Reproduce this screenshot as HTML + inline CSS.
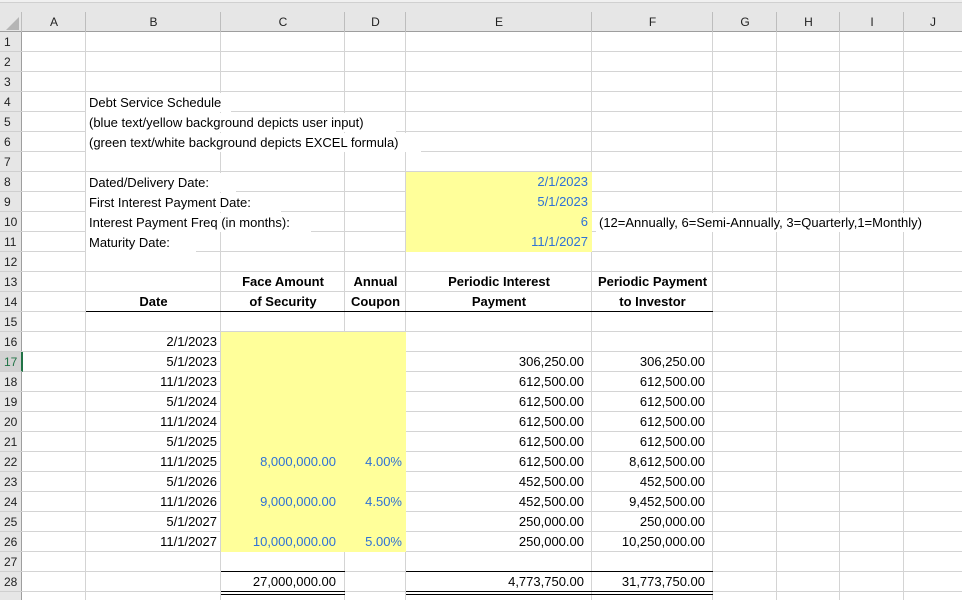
<!DOCTYPE html>
<html><head><meta charset="utf-8"><style>
*{margin:0;padding:0;box-sizing:border-box}
body{width:962px;height:600px;overflow:hidden;background:#fff;position:relative;font-family:"Liberation Sans",Arial,sans-serif;font-size:13px;color:#000}
#grid{position:absolute;left:0;top:32px;width:962px;height:568px;
background-image:
linear-gradient(to bottom,#d4d4d4 1px,transparent 1px);
background-size:962px 20px;background-position:0 19px}
.v{position:absolute;top:12px;bottom:0;width:1px;background:#d4d4d4}
.hd{position:absolute;left:0;top:0;width:962px;height:32px;background:#e6e6e6;border-bottom:1px solid #9e9e9e}
.hd .top{position:absolute;left:0;top:0;width:962px;height:3px;background:#f0f0f0;border-bottom:1px solid #d0d0d0}
.cl{position:absolute;top:12px;height:20px;line-height:20px;text-align:center;font-size:12px;color:#222}
.hs{position:absolute;top:12px;height:20px;width:1px;background:#bdbdbd}
.rh{position:absolute;left:0;top:32px;width:22px;height:568px;background:#e6e6e6;border-right:1px solid #9e9e9e}
.rn{position:absolute;left:0;width:22px;height:20px;line-height:20px;padding-left:4px;font-size:12px;color:#222;border-bottom:1px solid #cfcfcf}
.c{position:absolute;height:20px;line-height:20px;white-space:nowrap}
.r{text-align:right;padding-right:4px}
.l{padding-left:3px}
.ctr{text-align:center;font-weight:bold}
.y{position:absolute;background:#ffff9a}
.b{color:#2f72d6}
.hl{position:absolute;height:1px;background:#000}
.wb{background:#fff}
</style></head><body>
<div id="grid"></div>
<div class="v" style="left:85px"></div>
<div class="v" style="left:220px"></div>
<div class="v" style="left:344px"></div>
<div class="v" style="left:405px"></div>
<div class="v" style="left:591px"></div>
<div class="v" style="left:712px"></div>
<div class="v" style="left:776px"></div>
<div class="v" style="left:839px"></div>
<div class="v" style="left:903px"></div>

<div class="hd"><div class="top"></div>
<svg style="position:absolute;left:4px;top:15px" width="16" height="16"><polygon points="15,2 15,15 2,15" fill="#b5b5b5"/></svg>
<div class="hs" style="left:21px"></div>
<div class="cl" style="left:22px;width:64px">A</div><div class="hs" style="left:85px"></div>
<div class="cl" style="left:86px;width:135px">B</div><div class="hs" style="left:220px"></div>
<div class="cl" style="left:221px;width:124px">C</div><div class="hs" style="left:344px"></div>
<div class="cl" style="left:345px;width:61px">D</div><div class="hs" style="left:405px"></div>
<div class="cl" style="left:406px;width:186px">E</div><div class="hs" style="left:591px"></div>
<div class="cl" style="left:592px;width:121px">F</div><div class="hs" style="left:712px"></div>
<div class="cl" style="left:713px;width:64px">G</div><div class="hs" style="left:776px"></div>
<div class="cl" style="left:777px;width:63px">H</div><div class="hs" style="left:839px"></div>
<div class="cl" style="left:840px;width:64px">I</div><div class="hs" style="left:903px"></div>
<div class="cl" style="left:904px;width:58px">J</div>
</div>

<div class="rh">
<div class="rn" style="top:0">1</div><div class="rn" style="top:20px">2</div><div class="rn" style="top:40px">3</div><div class="rn" style="top:60px">4</div><div class="rn" style="top:80px">5</div><div class="rn" style="top:100px">6</div><div class="rn" style="top:120px">7</div><div class="rn" style="top:140px">8</div><div class="rn" style="top:160px">9</div><div class="rn" style="top:180px">10</div><div class="rn" style="top:200px">11</div><div class="rn" style="top:220px">12</div><div class="rn" style="top:240px">13</div><div class="rn" style="top:260px">14</div><div class="rn" style="top:280px">15</div><div class="rn" style="top:300px">16</div><div class="rn" style="top:320px;background:#d2d2d2;color:#217346;border-right:2px solid #217346;width:23px">17</div><div class="rn" style="top:340px">18</div><div class="rn" style="top:360px">19</div><div class="rn" style="top:380px">20</div><div class="rn" style="top:400px">21</div><div class="rn" style="top:420px">22</div><div class="rn" style="top:440px">23</div><div class="rn" style="top:460px">24</div><div class="rn" style="top:480px">25</div><div class="rn" style="top:500px">26</div><div class="rn" style="top:520px">27</div><div class="rn" style="top:540px">28</div>
</div>

<!-- yellow -->
<div class="y" style="left:406px;top:172px;width:186px;height:80px"></div>
<div class="y" style="left:221px;top:332px;width:185px;height:220px"></div>

<!-- overflow text -->
<div class="c l wb" style="left:86px;top:93px;width:145px;height:19px">Debt Service Schedule</div>
<div class="c l wb" style="left:86px;top:113px;width:310px;height:19px">(blue text/yellow background depicts user input)</div>
<div class="c l wb" style="left:86px;top:133px;width:335px;height:19px">(green text/white background depicts EXCEL formula)</div>
<div class="c l wb" style="left:86px;top:173px;width:150px;height:19px">Dated/Delivery Date:</div>
<div class="c l wb" style="left:86px;top:193px;width:195px;height:19px">First Interest Payment Date:</div>
<div class="c l wb" style="left:86px;top:213px;width:225px;height:19px">Interest Payment Freq (in months):</div>
<div class="c l wb" style="left:86px;top:233px;width:110px;height:19px">Maturity Date:</div>
<div class="c l wb" style="left:596px;top:213px;width:366px;height:19px">(12=Annually, 6=Semi-Annually, 3=Quarterly,1=Monthly)</div>

<div class="c r b" style="left:406px;width:186px;top:172px">2/1/2023</div>
<div class="c r b" style="left:406px;width:186px;top:192px">5/1/2023</div>
<div class="c r b" style="left:406px;width:186px;top:212px">6</div>
<div class="c r b" style="left:406px;width:186px;top:232px">11/1/2027</div>

<!-- headers -->
<div class="c ctr" style="left:221px;width:124px;top:272px">Face Amount</div>
<div class="c ctr" style="left:345px;width:61px;top:272px">Annual</div>
<div class="c ctr" style="left:406px;width:186px;top:272px">Periodic Interest</div>
<div class="c ctr" style="left:592px;width:121px;top:272px">Periodic Payment</div>
<div class="c ctr" style="left:86px;width:135px;top:292px">Date</div>
<div class="c ctr" style="left:221px;width:124px;top:292px">of Security</div>
<div class="c ctr" style="left:345px;width:61px;top:292px">Coupon</div>
<div class="c ctr" style="left:406px;width:186px;top:292px">Payment</div>
<div class="c ctr" style="left:592px;width:121px;top:292px">to Investor</div>
<div class="hl" style="left:86px;width:627px;top:311px"></div>

<!-- dates -->
<div class="c r" style="left:86px;width:135px;top:332px">2/1/2023</div>
<div class="c r" style="left:86px;width:135px;top:352px">5/1/2023</div>
<div class="c r" style="left:86px;width:135px;top:372px">11/1/2023</div>
<div class="c r" style="left:86px;width:135px;top:392px">5/1/2024</div>
<div class="c r" style="left:86px;width:135px;top:412px">11/1/2024</div>
<div class="c r" style="left:86px;width:135px;top:432px">5/1/2025</div>
<div class="c r" style="left:86px;width:135px;top:452px">11/1/2025</div>
<div class="c r" style="left:86px;width:135px;top:472px">5/1/2026</div>
<div class="c r" style="left:86px;width:135px;top:492px">11/1/2026</div>
<div class="c r" style="left:86px;width:135px;top:512px">5/1/2027</div>
<div class="c r" style="left:86px;width:135px;top:532px">11/1/2027</div>

<div class="c r b" style="left:221px;width:124px;top:452px;padding-right:9px">8,000,000.00</div>
<div class="c r b" style="left:221px;width:124px;top:492px;padding-right:9px">9,000,000.00</div>
<div class="c r b" style="left:221px;width:124px;top:532px;padding-right:9px">10,000,000.00</div>
<div class="c r b" style="left:345px;width:61px;top:452px">4.00%</div>
<div class="c r b" style="left:345px;width:61px;top:492px">4.50%</div>
<div class="c r b" style="left:345px;width:61px;top:532px">5.00%</div>

<div class="c r" style="left:406px;width:186px;top:352px;padding-right:8px">306,250.00</div>
<div class="c r" style="left:406px;width:186px;top:372px;padding-right:8px">612,500.00</div>
<div class="c r" style="left:406px;width:186px;top:392px;padding-right:8px">612,500.00</div>
<div class="c r" style="left:406px;width:186px;top:412px;padding-right:8px">612,500.00</div>
<div class="c r" style="left:406px;width:186px;top:432px;padding-right:8px">612,500.00</div>
<div class="c r" style="left:406px;width:186px;top:452px;padding-right:8px">612,500.00</div>
<div class="c r" style="left:406px;width:186px;top:472px;padding-right:8px">452,500.00</div>
<div class="c r" style="left:406px;width:186px;top:492px;padding-right:8px">452,500.00</div>
<div class="c r" style="left:406px;width:186px;top:512px;padding-right:8px">250,000.00</div>
<div class="c r" style="left:406px;width:186px;top:532px;padding-right:8px">250,000.00</div>

<div class="c r" style="left:592px;width:121px;top:352px;padding-right:8px">306,250.00</div>
<div class="c r" style="left:592px;width:121px;top:372px;padding-right:8px">612,500.00</div>
<div class="c r" style="left:592px;width:121px;top:392px;padding-right:8px">612,500.00</div>
<div class="c r" style="left:592px;width:121px;top:412px;padding-right:8px">612,500.00</div>
<div class="c r" style="left:592px;width:121px;top:432px;padding-right:8px">612,500.00</div>
<div class="c r" style="left:592px;width:121px;top:452px;padding-right:8px">8,612,500.00</div>
<div class="c r" style="left:592px;width:121px;top:472px;padding-right:8px">452,500.00</div>
<div class="c r" style="left:592px;width:121px;top:492px;padding-right:8px">9,452,500.00</div>
<div class="c r" style="left:592px;width:121px;top:512px;padding-right:8px">250,000.00</div>
<div class="c r" style="left:592px;width:121px;top:532px;padding-right:8px">10,250,000.00</div>

<!-- totals -->
<div class="hl" style="left:221px;width:124px;top:571px"></div>
<div class="hl" style="left:406px;width:307px;top:571px"></div>
<div class="c r" style="left:221px;width:124px;top:572px;padding-right:9px">27,000,000.00</div>
<div class="c r" style="left:406px;width:186px;top:572px;padding-right:8px">4,773,750.00</div>
<div class="c r" style="left:592px;width:121px;top:572px;padding-right:8px">31,773,750.00</div>
<div class="hl" style="left:221px;width:124px;top:591px"></div>
<div class="hl" style="left:221px;width:124px;top:594px"></div>
<div class="hl" style="left:406px;width:307px;top:591px"></div>
<div class="hl" style="left:406px;width:307px;top:594px"></div>
</body></html>
